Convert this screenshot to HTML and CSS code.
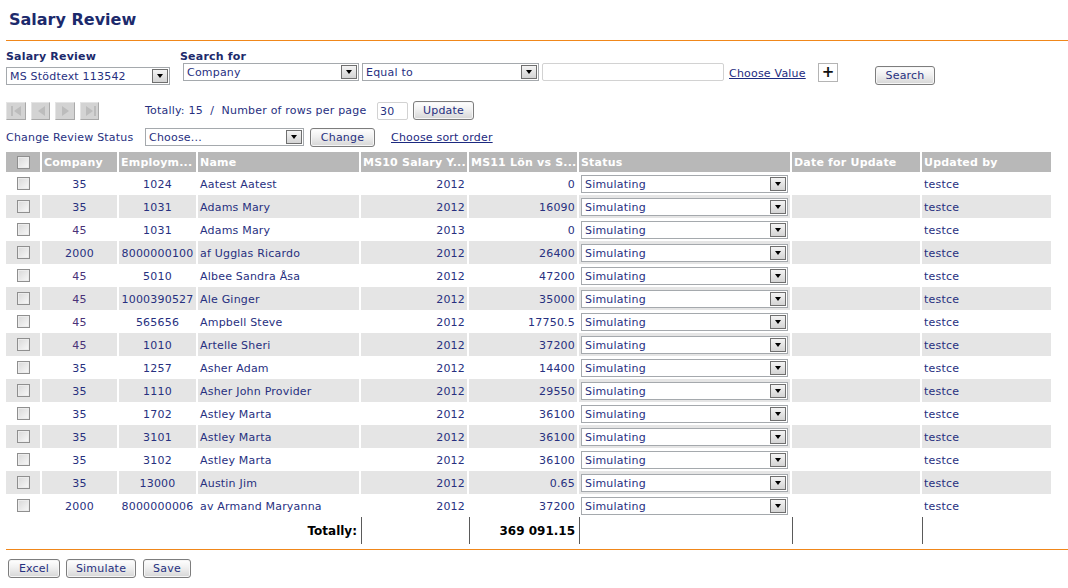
FILE: index.html
```html
<!DOCTYPE html>
<html>
<head>
<meta charset="utf-8">
<title>Salary Review</title>
<link rel="stylesheet" href="styles.css">
</head>
<body>
<div class="page">
  <h1 class="title">Salary Review</h1>

  <div class="filters">
    <div class="fgroup review">
      <div class="flabel">Salary Review</div>
      <span class="sel w-review"><span class="sel-text">MS Stödtext 113542</span><span class="sel-btn"></span></span>
    </div>
    <div class="fgroup search">
      <div class="flabel">Search for</div>
      <div class="search-row">
        <span class="sel w-company"><span class="sel-text">Company</span><span class="sel-btn"></span></span>
        <span class="sel w-op"><span class="sel-text">Equal to</span><span class="sel-btn"></span></span>
        <span class="input w-value"></span>
        <a class="link choose-value" href="#">Choose Value</a>
        <span class="plus">+</span>
        <span class="btn btn-search">Search</span>
      </div>
    </div>
  </div>

  <div class="pager">
    <div class="pager-icons">
      <span class="pbtn"><svg width="21" height="18" viewBox="0 0 21 18"><rect x="5" y="4" width="2" height="10" fill="#bcbcbc"/><path d="M15 4 L8 9 L15 14 Z" fill="#bcbcbc"/></svg></span>
      <span class="pbtn"><svg width="21" height="18" viewBox="0 0 21 18"><path d="M14 4 L7 9 L14 14 Z" fill="#bcbcbc"/></svg></span>
      <span class="pbtn"><svg width="21" height="18" viewBox="0 0 21 18"><path d="M7 4 L14 9 L7 14 Z" fill="#bcbcbc"/></svg></span>
      <span class="pbtn"><svg width="21" height="18" viewBox="0 0 21 18"><path d="M6 4 L13 9 L6 14 Z" fill="#bcbcbc"/><rect x="14" y="4" width="2" height="10" fill="#bcbcbc"/></svg></span>
    </div>
    <span class="pager-text">Totally: 15&nbsp; /&nbsp; Number of rows per page</span>
    <span class="input w-rows">30</span>
    <span class="btn btn-update">Update</span>
  </div>

  <div class="status-row">
    <span class="status-label">Change Review Status</span>
    <span class="sel w-choose"><span class="sel-text">Choose...</span><span class="sel-btn"></span></span>
    <span class="btn btn-change">Change</span>
    <a class="link sort-link" href="#">Choose sort order</a>
  </div>

  <table class="grid">
    <colgroup>
      <col class="c-cb"><col class="c-company"><col class="c-emp"><col class="c-name"><col class="c-ms10"><col class="c-ms11"><col class="c-status"><col class="c-date"><col class="c-upd">
    </colgroup>
    <thead>
      <tr>
        <th class="center"><span class="cb"></span></th>
        <th>Company</th>
        <th>Employm...</th>
        <th>Name</th>
        <th>MS10 Salary Y...</th>
        <th>MS11 Lön vs S...</th>
        <th>Status</th>
        <th>Date for Update</th>
        <th>Updated by</th>
      </tr>
    </thead>
    <tbody>
      <tr><td class="center"><span class="cb"></span></td><td class="center">35</td><td class="center">1024</td><td>Aatest Aatest</td><td class="right">2012</td><td class="right">0</td><td><span class="sel w-st"><span class="sel-text">Simulating</span><span class="sel-btn"></span></span></td><td></td><td>testce</td></tr>
      <tr class="alt"><td class="center"><span class="cb"></span></td><td class="center">35</td><td class="center">1031</td><td>Adams Mary</td><td class="right">2012</td><td class="right">16090</td><td><span class="sel w-st"><span class="sel-text">Simulating</span><span class="sel-btn"></span></span></td><td></td><td>testce</td></tr>
      <tr><td class="center"><span class="cb"></span></td><td class="center co45">45</td><td class="center">1031</td><td>Adams Mary</td><td class="right">2013</td><td class="right">0</td><td><span class="sel w-st"><span class="sel-text">Simulating</span><span class="sel-btn"></span></span></td><td></td><td>testce</td></tr>
      <tr class="alt"><td class="center"><span class="cb"></span></td><td class="center">2000</td><td class="center">8000000100</td><td>af Ugglas Ricardo</td><td class="right">2012</td><td class="right">26400</td><td><span class="sel w-st"><span class="sel-text">Simulating</span><span class="sel-btn"></span></span></td><td></td><td>testce</td></tr>
      <tr><td class="center"><span class="cb"></span></td><td class="center co45">45</td><td class="center">5010</td><td>Albee Sandra Åsa</td><td class="right">2012</td><td class="right">47200</td><td><span class="sel w-st"><span class="sel-text">Simulating</span><span class="sel-btn"></span></span></td><td></td><td>testce</td></tr>
      <tr class="alt"><td class="center"><span class="cb"></span></td><td class="center co45">45</td><td class="center">1000390527</td><td>Ale Ginger</td><td class="right">2012</td><td class="right">35000</td><td><span class="sel w-st"><span class="sel-text">Simulating</span><span class="sel-btn"></span></span></td><td></td><td>testce</td></tr>
      <tr><td class="center"><span class="cb"></span></td><td class="center co45">45</td><td class="center">565656</td><td>Ampbell Steve</td><td class="right">2012</td><td class="right">17750.5</td><td><span class="sel w-st"><span class="sel-text">Simulating</span><span class="sel-btn"></span></span></td><td></td><td>testce</td></tr>
      <tr class="alt"><td class="center"><span class="cb"></span></td><td class="center co45">45</td><td class="center">1010</td><td>Artelle Sheri</td><td class="right">2012</td><td class="right">37200</td><td><span class="sel w-st"><span class="sel-text">Simulating</span><span class="sel-btn"></span></span></td><td></td><td>testce</td></tr>
      <tr><td class="center"><span class="cb"></span></td><td class="center">35</td><td class="center">1257</td><td>Asher Adam</td><td class="right">2012</td><td class="right">14400</td><td><span class="sel w-st"><span class="sel-text">Simulating</span><span class="sel-btn"></span></span></td><td></td><td>testce</td></tr>
      <tr class="alt"><td class="center"><span class="cb"></span></td><td class="center">35</td><td class="center">1110</td><td>Asher John Provider</td><td class="right">2012</td><td class="right">29550</td><td><span class="sel w-st"><span class="sel-text">Simulating</span><span class="sel-btn"></span></span></td><td></td><td>testce</td></tr>
      <tr><td class="center"><span class="cb"></span></td><td class="center">35</td><td class="center">1702</td><td>Astley Marta</td><td class="right">2012</td><td class="right">36100</td><td><span class="sel w-st"><span class="sel-text">Simulating</span><span class="sel-btn"></span></span></td><td></td><td>testce</td></tr>
      <tr class="alt"><td class="center"><span class="cb"></span></td><td class="center">35</td><td class="center">3101</td><td>Astley Marta</td><td class="right">2012</td><td class="right">36100</td><td><span class="sel w-st"><span class="sel-text">Simulating</span><span class="sel-btn"></span></span></td><td></td><td>testce</td></tr>
      <tr><td class="center"><span class="cb"></span></td><td class="center">35</td><td class="center">3102</td><td>Astley Marta</td><td class="right">2012</td><td class="right">36100</td><td><span class="sel w-st"><span class="sel-text">Simulating</span><span class="sel-btn"></span></span></td><td></td><td>testce</td></tr>
      <tr class="alt"><td class="center"><span class="cb"></span></td><td class="center">35</td><td class="center">13000</td><td>Austin Jim</td><td class="right">2012</td><td class="right">0.65</td><td><span class="sel w-st"><span class="sel-text">Simulating</span><span class="sel-btn"></span></span></td><td></td><td>testce</td></tr>
      <tr><td class="center"><span class="cb"></span></td><td class="center">2000</td><td class="center">8000000006</td><td>av Armand Maryanna</td><td class="right">2012</td><td class="right">37200</td><td><span class="sel w-st"><span class="sel-text">Simulating</span><span class="sel-btn"></span></span></td><td></td><td>testce</td></tr>
    </tbody>
    <tfoot>
      <tr class="totals">
        <td colspan="4" class="right tot-label">Totally:</td>
        <td class="bl"></td>
        <td class="bl right tot-val">369 091.15</td>
        <td class="bl"></td>
        <td class="bl"></td>
        <td class="bl"></td>
      </tr>
    </tfoot>
  </table>

  <div class="footer">
    <span class="btn btn-excel">Excel</span>
    <span class="btn btn-simulate">Simulate</span>
    <span class="btn btn-save">Save</span>
  </div>
</div>
</body>
</html>
```

FILE: styles.css
```css
* { box-sizing: border-box; }

body {
  margin: 0;
  background: #ffffff;
  font-family: "DejaVu Sans", Verdana, sans-serif;
  font-size: 11px;
  letter-spacing: 0.2px;
  color: #27307f;
}

.page {
  padding-left: 6px;
}

.title {
  margin: 0;
  height: 41px;
  padding: 9px 0 0 3px;
  font-size: 16px;
  line-height: 22px;
  font-weight: bold;
  letter-spacing: 0;
  color: #1c2a6c;
  border-bottom: 1px solid #f0871a;
}

/* filters */
.filters {
  display: flex;
  margin-top: 8px;
}
.flabel {
  font-weight: bold;
  line-height: 14px;
  height: 14px;
  padding-top: 1px;
  color: #1c2a6c;
}
.review .sel { margin-top: 4px; }
.search { margin-left: 10px; }
.search-row {
  display: flex;
  align-items: flex-start;
  margin-left: 3px;
}
.search-row > * + * { margin-left: 3px; }
.search-row .choose-value { margin-left: 5px; margin-top: 4px; width: 79px; white-space: nowrap; }
.search-row .plus { margin-left: 10px; }
.search-row .btn-search { margin-left: 37px; margin-top: 3px; }

/* select imitation */
.sel {
  position: relative;
  display: inline-block;
  height: 18px;
  border: 1px solid #a5a9ad;
  background: #ffffff;
  line-height: 17px;
  padding-left: 3px;
  color: #27307f;
  white-space: nowrap;
  vertical-align: top;
}
.sel-btn {
  position: absolute;
  right: 1px;
  top: 1px;
  width: 16px;
  height: 14px;
  border: 1px solid #6f6f6f;
  background: linear-gradient(#f4f4f4, #d4d4d4);
}
.sel-btn::after {
  content: "";
  position: absolute;
  left: 4px;
  top: 4px;
  border-left: 3px solid transparent;
  border-right: 3px solid transparent;
  border-top: 4px solid #000000;
}
.w-review { width: 164px; }
.w-company { width: 176px; }
.w-op { width: 177px; }
.w-choose { width: 159px; }
.w-st { width: 207px; margin-left: 2px; }

.input {
  display: inline-block;
  height: 18px;
  border: 1px solid #d2d2d2;
  border-radius: 2px;
  background: #ffffff;
  line-height: 17px;
  padding-left: 2px;
  vertical-align: top;
}
.w-value { width: 182px; }
.w-rows { width: 31px; margin-left: 4px; margin-top: 1px; }

.link {
  color: #1c2a80;
  text-decoration: underline;
  line-height: 14px;
}

.plus {
  display: inline-block;
  width: 20px;
  height: 19px;
  border: 1px solid #b4b4b4;
  background: #ffffff;
  text-align: center;
  font-weight: bold;
  font-size: 15px;
  line-height: 16px;
  letter-spacing: 0;
  color: #111111;
}

.btn {
  display: inline-block;
  height: 19px;
  border: 1px solid #7d7d7d;
  border-radius: 3px;
  background: linear-gradient(#ffffff, #f0f0f0 45%, #d6d6d6);
  box-shadow: inset 0 0 0 1px #f6f6f6;
  color: #27307f;
  text-align: center;
  line-height: 18px;
  vertical-align: top;
}
.btn-search { width: 60px; }
.btn-update { width: 61px; margin-left: 5px; }
.btn-change { width: 65px; margin-left: 6px; }

/* pager */
.pager {
  display: flex;
  align-items: flex-start;
  margin-top: 16px;
  height: 19px;
}
.pager-icons {
  display: flex;
  width: 98px;
  margin-top: 1px;
}
.pbtn {
  display: block;
  width: 21px;
  height: 18px;
  margin-right: 5px;
  background: #d3d3d3;
  border-top: 1px solid #e4e4e4;
  border-left: 1px solid #e4e4e4;
  border-right: 1px solid #a9a9a9;
  border-bottom: 1px solid #a9a9a9;
  overflow: hidden;
}
.pbtn svg { display: block; margin: -1px 0 0 -1px; }
.pager-text {
  margin-left: 41px;
  width: 228px;
  white-space: nowrap;
  line-height: 20px;
}

/* status row */
.status-row {
  display: flex;
  align-items: flex-start;
  margin-top: 8px;
  height: 19px;
}
.status-label {
  width: 139px;
  line-height: 19px;
}
.sort-link {
  margin-left: 16px;
  line-height: 19px;
}

/* grid */
.grid {
  margin-top: 5px;
  margin-left: -2px;
  border-collapse: separate;
  border-spacing: 2px 0;
  table-layout: fixed;
  width: 1049px;
}
.c-cb { width: 34px; }
.c-company { width: 75px; }
.c-emp { width: 77px; }
.c-name { width: 161px; }
.c-ms10 { width: 106px; }
.c-ms11 { width: 108px; }
.c-status { width: 211px; }
.c-date { width: 128px; }
.c-upd { width: 129px; }

.grid th {
  height: 20px;
  padding: 1px 2px 0;
  background: #b8b8b8;
  color: #ffffff;
  font-weight: bold;
  text-align: left;
  white-space: nowrap;
  overflow: hidden;
}
.grid th.center { text-align: center; padding-top: 0; }
.grid td {
  height: 23px;
  padding: 1px 2px 0;
  white-space: nowrap;
  overflow: hidden;
  vertical-align: middle;
}
.grid td:nth-child(7) { padding: 0; }
.grid tr.alt td { background: #e5e5e5; }
.grid .center { text-align: center; }
.grid .right { text-align: right; }
.grid .co45 { color: #4a3278; }

.cb {
  display: inline-block;
  width: 13px;
  height: 13px;
  border: 1px solid #8f8f8f;
  background: linear-gradient(135deg, #d8d8d8, #f9f9f9);
  box-shadow: inset 0 0 0 1px #ececec;
  vertical-align: middle;
  margin-top: -3px;
}
.grid th .cb { margin-top: 0; }

.grid tr.totals td {
  height: 27px;
  font-weight: bold;
  color: #000000;
  font-size: 12px;
  letter-spacing: 0;
}
.grid tr.totals td.bl { border-left: 1px solid #5a5a5a; }

/* footer */
.footer {
  display: flex;
  margin-top: 5px;
  padding-top: 9px;
  border-top: 1px solid #f0871a;
  padding-left: 2px;
}
.btn-excel { width: 52px; }
.btn-simulate { width: 70px; margin-left: 6px; }
.btn-save { width: 48px; margin-left: 7px; }
```
